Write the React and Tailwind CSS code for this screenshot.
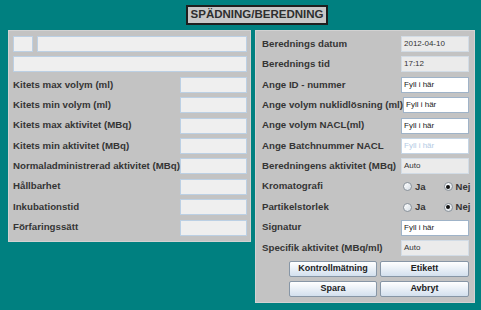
import React from 'react';

const leftRows = [
  'Kitets max volym (ml)',
  'Kitets min volym (ml)',
  'Kitets max aktivitet (MBq)',
  'Kitets min aktivitet (MBq)',
  'Normaladministrerad aktivitet (MBq)',
  'Hållbarhet',
  'Inkubationstid',
  'Förfaringssätt',
];

const rightRows = [
  { label: 'Berednings datum', kind: 'auto', value: '2012-04-10' },
  { label: 'Berednings tid', kind: 'auto', value: '17:12' },
  { label: 'Ange ID - nummer', kind: 'input', value: 'Fyll i här' },
  { label: 'Ange volym nuklidlösning (ml)', kind: 'input', value: 'Fyll i här' },
  { label: 'Ange volym NACL(ml)', kind: 'input', value: 'Fyll i här' },
  { label: 'Ange Batchnummer NACL', kind: 'hint', value: 'Fyll i här' },
  { label: 'Beredningens aktivitet (MBq)', kind: 'auto', value: 'Auto' },
  { label: 'Kromatografi', kind: 'radio' },
  { label: 'Partikelstorlek', kind: 'radio' },
  { label: 'Signatur', kind: 'input', value: 'Fyll i här' },
  { label: 'Specifik aktivitet (MBq/ml)', kind: 'auto', value: 'Auto' },
];

const EmptyBox = ({ className = '' }) => (
  <div className={`h-4 bg-[#efefef] border border-[#bcd0e4] ${className}`} />
);

const Radio = ({ checked, label }) => (
  <div className="flex items-center gap-[3px]">
    <div className="w-[9px] h-[9px] rounded-full border border-[#8a939c] bg-gradient-to-br from-white to-[#d6dde4] flex items-center justify-center">
      {checked && <div className="w-[4px] h-[4px] rounded-full bg-[#111]" />}
    </div>
    <span className="text-[9.5px] font-bold text-[#333]">{label}</span>
  </div>
);

const Value = ({ kind, value }) => {
  if (kind === 'radio') {
    return (
      <div className="w-[68px] flex items-center pl-[2px] gap-[18px]">
        <Radio label="Ja" />
        <Radio label="Nej" checked />
      </div>
    );
  }
  const styles = {
    auto: 'bg-[#ebebeb] border-[#d2dce6] text-[#333]',
    input: 'bg-white border-[#9fb3c8] text-[#222]',
    hint: 'bg-white border-[#c4d4e4] text-[#b4cbe4]',
  };
  return (
    <div className={`w-[68px] h-4 border flex items-center pl-[2px] text-[8px] ${styles[kind]}`}>
      {value}
    </div>
  );
};

const Btn = ({ children, w }) => (
  <button className={`${w} h-4 border border-[#8796a6] rounded-[2px] bg-gradient-to-b from-white to-[#d3e0ee] text-[9px] font-bold text-[#222] flex items-center justify-center`}>
    {children}
  </button>
);

export default function App() {
  return (
    <div
      className="w-[481px] h-[310px] bg-[#008080] overflow-hidden"
      style={{ fontFamily: '"Liberation Sans", Arial, sans-serif' }}
    >
      {/* Title */}
      <div className="pt-[5px] pl-[186px]">
        <div className="w-[142px] h-5 border-2 border-[#1e1e1e] bg-[#c8c8c8] flex items-center justify-center text-[11.5px] font-bold text-[#2e2e2e]">
          SPÄDNING/BEREDNING
        </div>
      </div>

      <div className="flex items-start gap-[4px] pl-[8px] mt-[5px]">
        {/* Left panel */}
        <div className="w-[243px] h-[212px] bg-[#c3c3c3] border border-[#d2d2d2] pl-[4px] pt-[5px] pr-[3px] flex flex-col gap-[4.4px]">
          <div className="flex gap-[4px]">
            <EmptyBox className="w-[20px]" />
            <EmptyBox className="flex-1" />
          </div>
          <EmptyBox />
          {leftRows.map((l) => (
            <div key={l} className="flex items-center justify-between h-4">
              <span className="text-[9.7px] font-bold text-[#353535] whitespace-nowrap">{l}</span>
              <EmptyBox className="w-[67px] shrink-0" />
            </div>
          ))}
        </div>

        {/* Right panel */}
        <div className="w-[220px] h-[273px] bg-[#c3c3c3] border border-[#d2d2d2] pl-[6px] pt-[5px] pr-[5px] flex flex-col gap-[4.4px]">
          {rightRows.map((r) => (
            <div key={r.label} className="flex items-center justify-between h-4">
              <span className="text-[9.7px] font-bold text-[#353535] whitespace-nowrap">{r.label}</span>
              <Value kind={r.kind} value={r.value} />
            </div>
          ))}
          <div className="flex justify-end gap-[3px] pt-[0.5px]">
            <Btn w="w-[88px]">Kontrollmätning</Btn>
            <Btn w="w-[89px]">Etikett</Btn>
          </div>
          <div className="flex justify-end gap-[3px]">
            <Btn w="w-[88px]">Spara</Btn>
            <Btn w="w-[89px]">Avbryt</Btn>
          </div>
        </div>
      </div>
    </div>
  );
}
